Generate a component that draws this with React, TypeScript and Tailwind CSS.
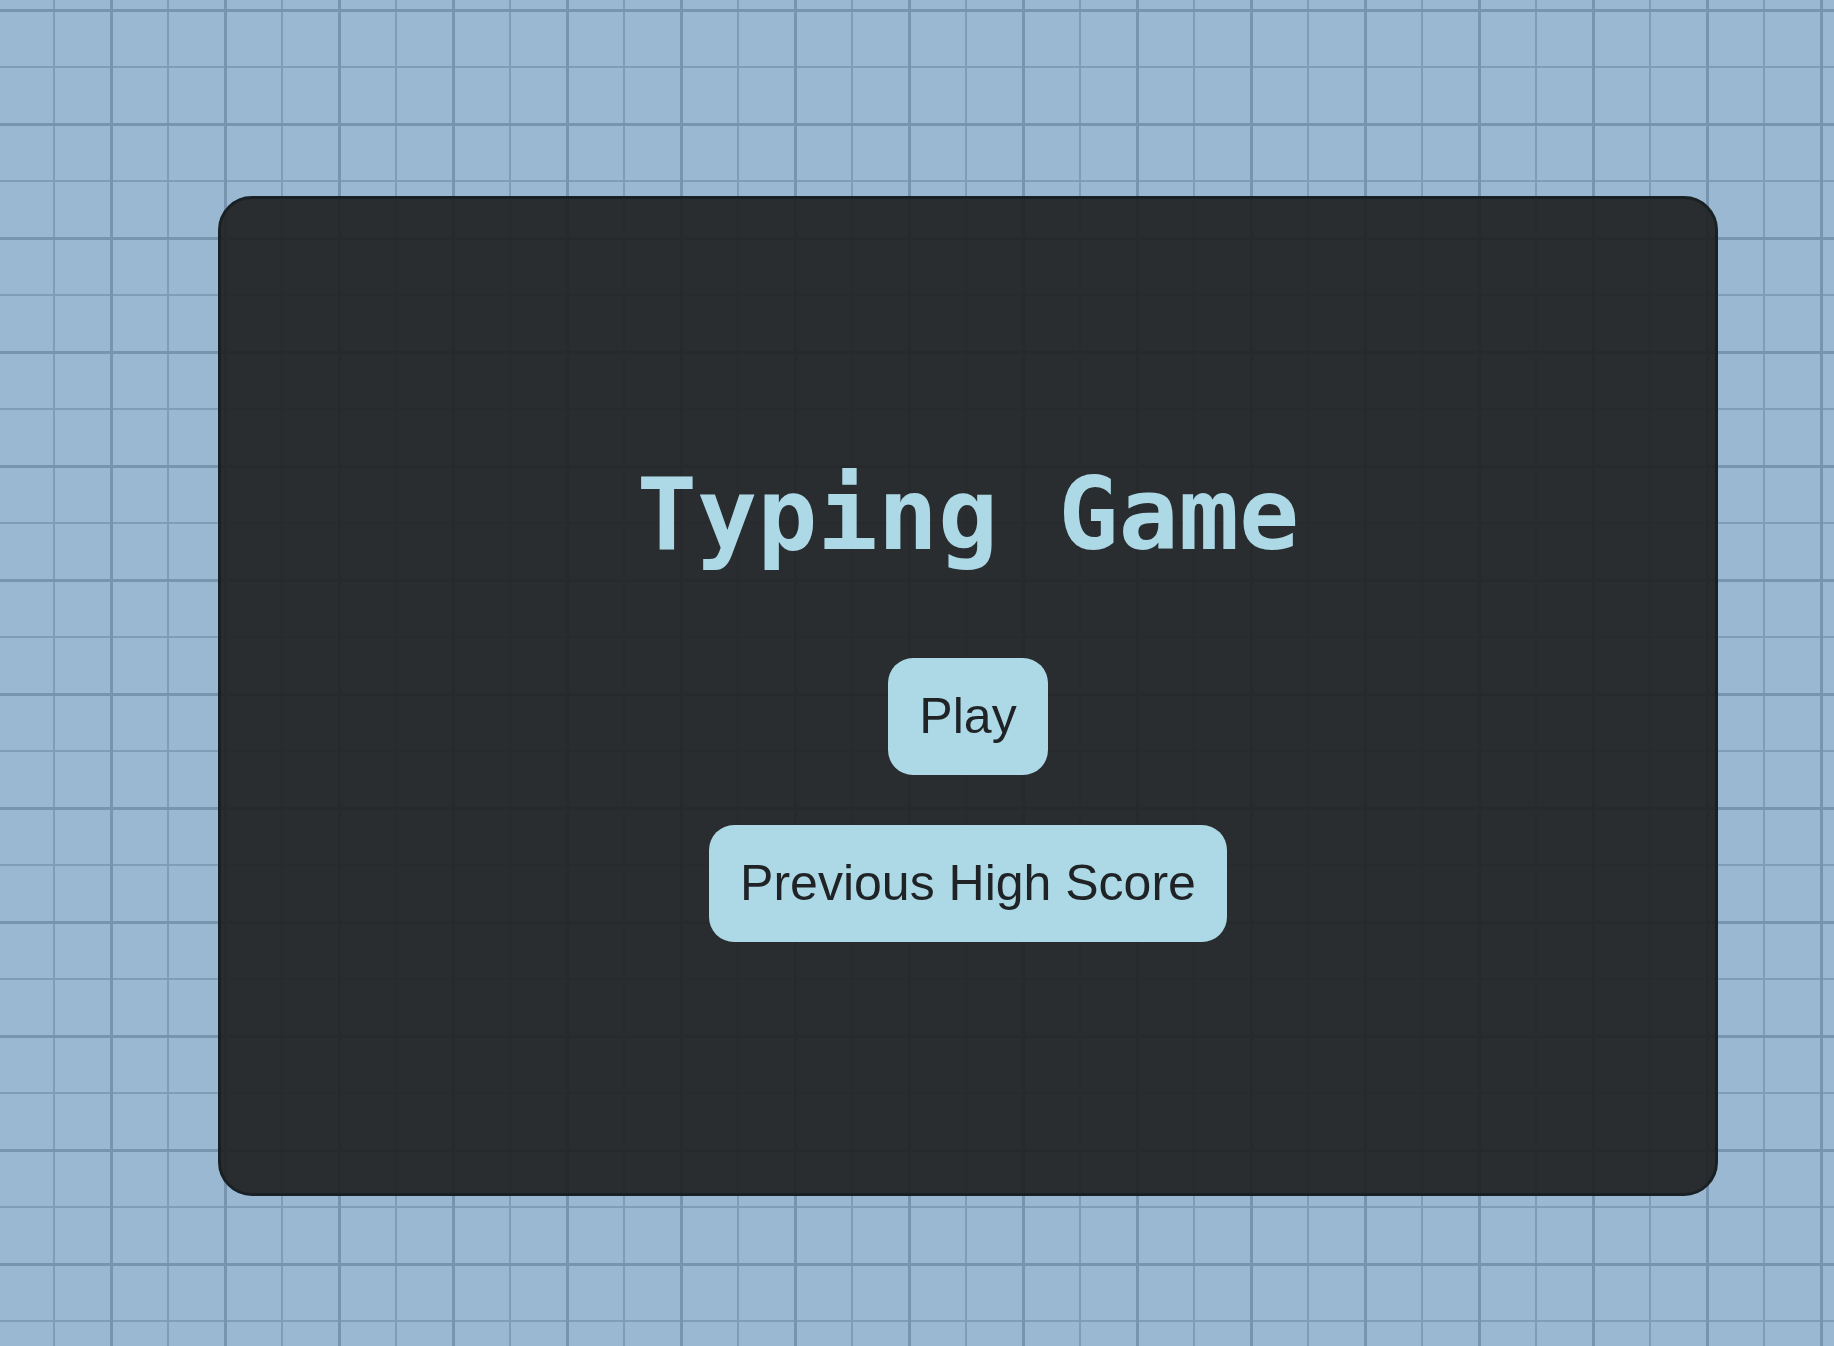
export default function App() {
    return (
        <div className="min-h-screen w-full bg-[#9ab8d1] [background-image:linear-gradient(to_right,#7895b0_3px,transparent_3px),linear-gradient(to_bottom,#7895b0_3px,transparent_3px),linear-gradient(to_right,#809db7_2px,transparent_2px),linear-gradient(to_bottom,#809db7_2px,transparent_2px)] [background-size:114px_114px,114px_114px,57px_57px,57px_57px] [background-position:110px_0,0_9px,53px_0,0_9px] pl-[218px] pt-[196px]">
            <div className="w-[1500px] h-[1000px] rounded-[34px] border-[3px] border-[#1a2125] bg-[rgba(30,30,30,0.9)] flex flex-col items-center pt-[266px]">
                <h1 className="font-['DejaVu_Sans_Mono',monospace] font-bold text-[100px] leading-none text-[#add8e6]">
                    Typing Game
                </h1>
                <div className="mt-[93px] flex flex-col items-center gap-[50px] font-['Liberation_Sans',Arial,sans-serif] text-[50px] leading-[57px] text-[#1f2326]">
                    <button className="bg-[#add8e6] rounded-[25px] px-[31px] py-[30px]">
                        Play
                    </button>
                    <button className="bg-[#add8e6] rounded-[25px] px-[31px] py-[30px]">
                        Previous High Score
                    </button>
                </div>
            </div>
        </div>
    );
}
